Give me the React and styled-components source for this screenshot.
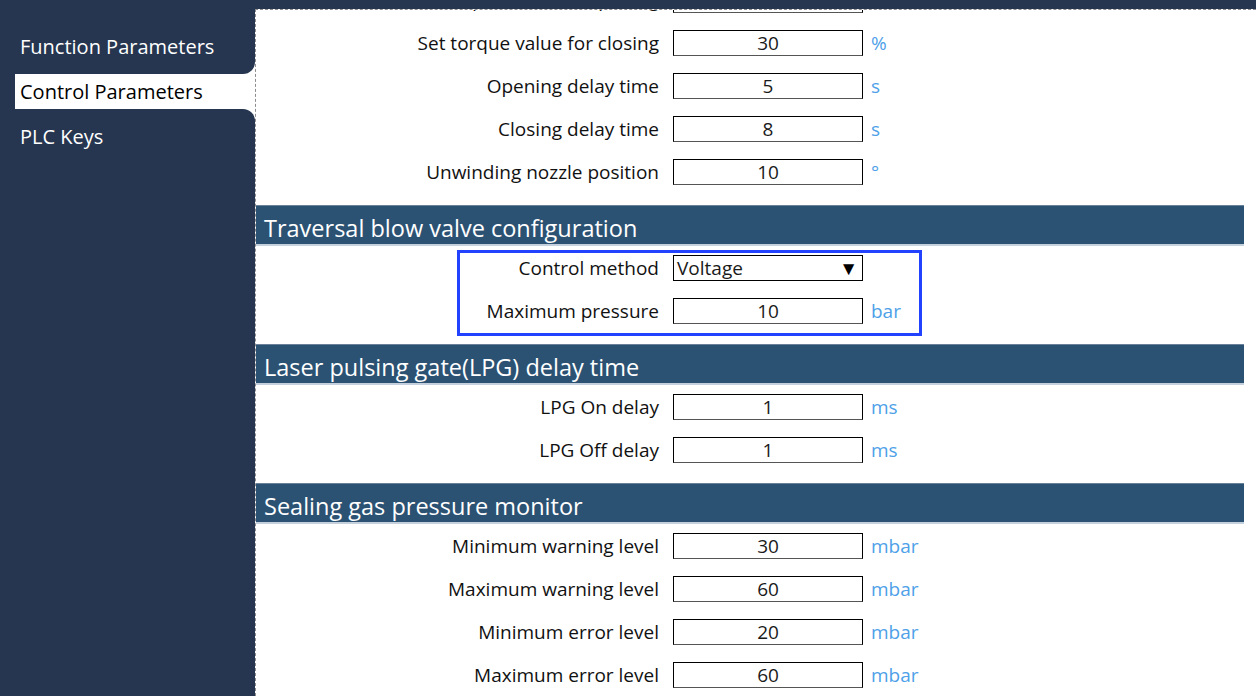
import styled, { createGlobalStyle } from "styled-components";

const GlobalStyle = createGlobalStyle`
    * { box-sizing: border-box; }
    html, body {
        margin: 0;
        padding: 0;
        background-color: #263650;
        font-family: "Open Sans", "Noto Sans", sans-serif;
        overflow: hidden;
    }
`;

const menu = ["Function Parameters", "Control Parameters", "PLC Keys"];
const activeIndex = 1;

const topRows = [
    { label: "Set torque value for opening", value: "30", unit: "%" },
    { label: "Set torque value for closing", value: "30", unit: "%" },
    { label: "Opening delay time", value: "5", unit: "s" },
    { label: "Closing delay time", value: "8", unit: "s" },
    { label: "Unwinding nozzle position", value: "10", unit: "°" },
];

const lpgRows = [
    { label: "LPG On delay", value: "1", unit: "ms" },
    { label: "LPG Off delay", value: "1", unit: "ms" },
];

const sealingRows = [
    { label: "Minimum warning level", value: "30", unit: "mbar" },
    { label: "Maximum warning level", value: "60", unit: "mbar" },
    { label: "Minimum error level", value: "20", unit: "mbar" },
    { label: "Maximum error level", value: "60", unit: "mbar" },
];

const ParamRow = ({ label, value, unit, compact }) => (
    <Row $compact={compact}>
        <Label $compact={compact}>{label}</Label>
        <ValueBox>{value}</ValueBox>
        <Unit>{unit}</Unit>
    </Row>
);

export default function App() {
    return (
        <>
            <GlobalStyle />
            <Page>
                <Sidebar>
                    {menu.map((item, i) => (
                        <MenuItem
                            key={item}
                            $active={i === activeIndex}
                            $before={i === activeIndex - 1}
                            $after={i === activeIndex + 1}
                        >
                            {item}
                        </MenuItem>
                    ))}
                </Sidebar>
                <Panel>
                    <Scroller>
                        <Section>
                            {topRows.map(r => <ParamRow key={r.label} {...r} />)}
                        </Section>

                        <SectionHeader>Traversal blow valve configuration</SectionHeader>
                        <Highlight>
                            <Row $compact>
                                <Label $compact>Control method</Label>
                                <SelectBox>
                                    <span>Voltage</span>
                                    <Arrow>▼</Arrow>
                                </SelectBox>
                            </Row>
                            <ParamRow compact label="Maximum pressure" value="10" unit="bar" />
                        </Highlight>

                        <SectionHeader>Laser pulsing gate(LPG) delay time</SectionHeader>
                        <Section>
                            {lpgRows.map(r => <ParamRow key={r.label} {...r} />)}
                        </Section>

                        <SectionHeader>Sealing gas pressure monitor</SectionHeader>
                        <Section>
                            {sealingRows.map(r => <ParamRow key={r.label} {...r} />)}
                        </Section>
                    </Scroller>
                </Panel>
            </Page>
        </>
    );
}

const Page = styled.div`
    display: flex;
    width: 1256px;
    height: 696px;
    background-color: #263650;
`;

const Sidebar = styled.nav`
    width: 255px;
    flex-shrink: 0;
    padding-top: 24px;
    display: flex;
    flex-direction: column;
    background: linear-gradient(to right, #263650 0, #263650 240px, #ffffff 240px);
    position: relative;
    &::before {
        content: "";
        position: absolute;
        left: 0;
        top: 0;
        right: 0;
        height: 24px;
        background-color: #263650;
    }
    &::after {
        content: "";
        flex: 1;
        background-color: #263650;
    }
`;

const MenuItem = styled.div`
    font-size: 20px;
    line-height: ${props => props.$active ? "35px" : "45px"};
    color: ${props => props.$active ? "#000000" : "#ffffff"};
    background-color: ${props => props.$active ? "#ffffff" : "#263650"};
    margin-left: ${props => props.$active ? "15px" : "0"};
    padding-left: ${props => props.$active ? "5px" : "20px"};
    padding-bottom: ${props => props.$before ? "5px" : "0"};
    padding-top: ${props => props.$after ? "5px" : "0"};
    border-bottom-right-radius: ${props => props.$before ? "12px" : "0"};
    border-top-right-radius: ${props => props.$after ? "12px" : "0"};
    white-space: nowrap;
`;

const Panel = styled.main`
    flex: 1;
    margin-top: 9px;
    background-color: #ffffff;
    border-top: 1px dashed #8c8c8c;
    border-left: 1px dashed #8c8c8c;
    overflow: hidden;
    padding-right: 12px;
`;

const Scroller = styled.div`
    margin-top: -32px;
    display: flex;
    flex-direction: column;
`;

const Section = styled.div`
    display: flex;
    flex-direction: column;
    margin-bottom: 12px;
`;

const SectionHeader = styled.h2`
    margin: 0;
    height: 41px;
    padding: 6px 0 0 8px;
    display: flex;
    align-items: center;
    background-color: #2c5273;
    border-top: 1px solid #6a8299;
    border-bottom: 2px solid #c4d1dc;
    color: #ffffff;
    font-size: 23.5px;
    font-weight: 400;
    white-space: nowrap;
`;

const Highlight = styled.div`
    margin: 4px 0 8px 201px;
    width: 465px;
    border: 3px solid #2342ff;
    padding: 2px 0 9px;
    display: flex;
    flex-direction: column;
    gap: 17px;
`;

const Row = styled.div`
    display: flex;
    align-items: center;
    height: ${props => props.$compact ? "26px" : "43px"};
`;

const Label = styled.div`
    width: ${props => props.$compact ? "213px" : "417px"};
    flex-shrink: 0;
    text-align: right;
    padding-right: 14px;
    font-size: 19px;
    color: #111111;
    white-space: nowrap;
`;

const ValueBox = styled.div`
    width: 190px;
    height: 26px;
    flex-shrink: 0;
    border: 1px solid #000000;
    border-bottom-color: #555555;
    display: flex;
    align-items: center;
    justify-content: center;
    font-size: 19px;
    color: #1a1a1a;
`;

const SelectBox = styled.div`
    width: 190px;
    height: 26px;
    flex-shrink: 0;
    border: 1px solid #000000;
    display: flex;
    align-items: center;
    justify-content: space-between;
    padding: 0 4px 0 3px;
    font-size: 19px;
    color: #1a1a1a;
`;

const Arrow = styled.span`
    font-size: 19px;
    color: #000000;
`;

const Unit = styled.div`
    margin-left: 8px;
    font-size: 19px;
    color: #4ea1e8;
    white-space: nowrap;
`;
